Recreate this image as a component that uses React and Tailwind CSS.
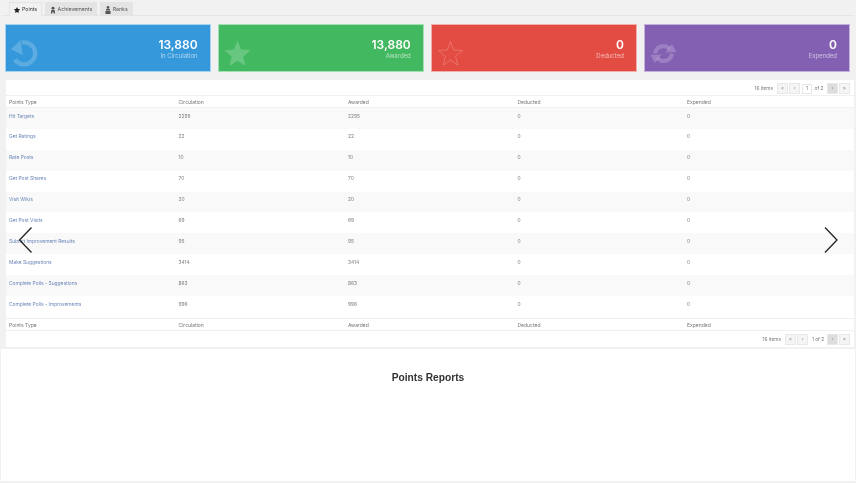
import React from "react";
import { FaStar } from "react-icons/fa";

const rows = [
  ["Hit Targets", "2295", "2295"],
  ["Get Ratings", "22", "22"],
  ["Rate Posts", "10", "10"],
  ["Get Post Shares", "70", "70"],
  ["Visit Wikis", "20", "20"],
  ["Get Post Visits", "69", "69"],
  ["Submit Improvement Results", "95", "95"],
  ["Make Suggestions", "3414", "3414"],
  ["Complete Polls - Suggestions", "863", "863"],
  ["Complete Polls - Improvements", "996", "996"],
];

const UndoIcon = () => (
  <svg width="27" height="27" viewBox="0 0 27 27" fill="none">
    <path d="M11 2.6 A11 11 0 1 1 4 19.5" stroke="currentColor" strokeWidth="4.4" />
    <path d="M0 9.3 L9.7 0 L11.7 15 Z" fill="currentColor" />
  </svg>
);

const StarFill = () => (
  <svg width="27" height="27" viewBox="0 0 27 27">
    <path d="M13.5 0.5 L17 9.6 L26.6 10.2 L19.2 16.4 L21.6 26 L13.5 20.7 L5.4 26 L7.8 16.4 L0.4 10.2 L10 9.6 Z" fill="currentColor" />
  </svg>
);

const StarLine = () => (
  <svg width="27" height="27" viewBox="0 0 27 27">
    <path d="M13.5 1.5 L16.7 10 L25.5 10.6 L18.6 16.2 L20.9 25 L13.5 20.1 L6.1 25 L8.4 16.2 L1.5 10.6 L10.3 10 Z" fill="none" stroke="currentColor" strokeWidth="1" />
  </svg>
);

const SyncIcon = () => (
  <svg width="27" height="27" viewBox="0 0 27 27" fill="none">
    <g transform="translate(0 3)">
      <path d="M5 10.5 A8.3 8.3 0 0 1 19.5 6" stroke="currentColor" strokeWidth="4" />
      <path d="M15.5 9.5 L26.5 9 L22 1 Z" fill="currentColor" />
      <path d="M22 10.5 A8.3 8.3 0 0 1 7.5 15" stroke="currentColor" strokeWidth="4" />
      <path d="M11.5 11.5 L0.5 12 L5 20 Z" fill="currentColor" />
    </g>
  </svg>
);

const AchieveIcon = () => (
  <svg width="7" height="8" viewBox="0 0 7 8" fill="currentColor">
    <circle cx="3.5" cy="2" r="1.7" />
    <path d="M1 8 L1.6 4 L5.4 4 L6 8 L4.5 8 L3.5 5.5 L2.5 8 Z" />
  </svg>
);

const RankIcon = () => (
  <svg width="6" height="8" viewBox="0 0 6 8" fill="currentColor">
    <circle cx="3" cy="1.4" r="1.3" />
    <rect x="1" y="3" width="4" height="1.5" />
    <rect x="0.5" y="5" width="5" height="3" />
  </svg>
);

function Card({ bg, border, value, label, icon }) {
  return (
    <div className={`flex-1 h-[48px] ${bg} border ${border} flex items-end justify-between pl-[5px] pr-[12px] pb-[4px] text-white`}>
      <div className="text-white/20 h-[27px]">{icon}</div>
      <div className="text-right self-start pt-[12px]">
        <div className="text-[12px] leading-[15px] font-semibold">{value}</div>
        <div className="text-[6px] leading-[8px] text-white/60">{label}</div>
      </div>
    </div>
  );
}

function HeadRow() {
  return (
    <div className="grid grid-cols-[repeat(5,169.5px)] h-[13px] items-center border-y border-[#f0f0f0] pl-[3px] pt-[2px] text-[5px] text-[#777777]">
      <div>Points Type</div>
      <div>Circulation</div>
      <div>Awarded</div>
      <div>Deducted</div>
      <div>Expended</div>
    </div>
  );
}

function PageBtn({ children, active }) {
  return (
    <span className={`w-[11px] h-[11px] flex items-center justify-center border border-[#e8e8e8] text-[5px] text-[#888888] ${active ? "bg-[#dddddd]" : "bg-[#f5f5f5]"}`}>
      {children}
    </span>
  );
}

function Pager({ top }) {
  return (
    <div className={`flex items-center justify-end gap-[1px] pr-[4px] text-[4.8px] text-[#777777] ${top ? "h-[15px] pt-[2px]" : "h-[16px] pt-[2px]"}`}>
      <span className="mr-[3px]">16 items</span>
      <PageBtn>«</PageBtn>
      <PageBtn>‹</PageBtn>
      {top ? (
        <>
          <span className="w-[10px] h-[10px] ml-[1px] flex items-center justify-center border border-[#e8e8e8] bg-white">1</span>
          <span className="w-[12px] text-center mr-[1px]">of 2</span>
        </>
      ) : (
        <span className="w-[14px] ml-[2px] mr-[1px] text-center">1 of 2</span>
      )}
      <PageBtn active>›</PageBtn>
      <PageBtn>»</PageBtn>
    </div>
  );
}

function Tab({ icon, label, active }) {
  return (
    <div className={`h-[14px] flex items-center gap-[2px] pl-[4px] pr-[4px] pt-[1px] border border-[#e4e4e4] text-[5.2px] ${active ? "bg-[#f1f1f1] border-b-[#f1f1f1] text-[#333333]" : "bg-[#e4e4e4] text-[#555555]"}`}>
      <span className="w-[6px] flex justify-center text-[6px]">{icon}</span>
      {label}
    </div>
  );
}

export default function App() {
  return (
    <div className="relative w-[856px] h-[483px] overflow-hidden bg-[#f1f1f1] font-['Inter',sans-serif]">
      <div className="blur-[0.35px]">
        <div className="flex gap-[2.5px] h-[16px] pt-[2px] pl-[7px] mx-[2px] border-b border-[#e6e6e6]">
          <Tab active icon={<FaStar className="text-[#222222]" />} label="Points" />
          <Tab icon={<AchieveIcon />} label="Achievements" />
          <Tab icon={<RankIcon />} label="Ranks" />
        </div>

        <div className="flex gap-[7.5px] pl-[5px] pr-[6px] pt-[8px]">
          <Card bg="bg-[#3498db]" border="border-[#a8d3f0]" value="13,880" label="In Circulation" icon={<UndoIcon />} />
          <Card bg="bg-[#42b860]" border="border-[#a5dfb3]" value="13,880" label="Awarded" icon={<StarFill />} />
          <Card bg="bg-[#e34c43]" border="border-[#f2b0ab]" value="0" label="Deducted" icon={<StarLine />} />
          <Card bg="bg-[#8460b3]" border="border-[#c6b3dd]" value="0" label="Expended" icon={<SyncIcon />} />
        </div>

        <div className="mt-[8px] ml-[6px] mr-[2px] h-[267px] bg-white">
          <Pager top />
          <HeadRow />
          {rows.map((r, i) => (
            <div key={r[0]} className={`grid grid-cols-[repeat(5,169.5px)] h-[20.9px] pl-[3px] pt-[4.5px] text-[4.9px] leading-[7px] text-[#808080] ${i % 2 === 0 ? "bg-[#f9f9f9]" : "bg-white"}`}>
              <div className="text-[#6a86b8]">{r[0]}</div>
              <div>{r[1]}</div>
              <div>{r[2]}</div>
              <div>0</div>
              <div>0</div>
            </div>
          ))}
          <div className="mt-[1px]">
            <HeadRow />
          </div>
          <Pager />
        </div>

        <div className="mt-[2px] mx-[1px] h-[132px] bg-white pt-[23px] text-center font-['Liberation_Sans',sans-serif] text-[10.2px] leading-[12px] font-bold text-[#333333]">
          Points Reports
        </div>
      </div>

      <svg className="absolute left-[18px] top-[226px]" width="16" height="28" viewBox="0 0 16 28" fill="none" stroke="#222222" strokeWidth="1.3">
        <path d="M13.5 1.5 L1.5 14 L13.5 26.5" />
      </svg>
      <svg className="absolute left-[823px] top-[226px]" width="16" height="28" viewBox="0 0 16 28" fill="none" stroke="#222222" strokeWidth="1.3">
        <path d="M2 1.5 L14 14 L2 26.5" />
      </svg>
    </div>
  );
}
